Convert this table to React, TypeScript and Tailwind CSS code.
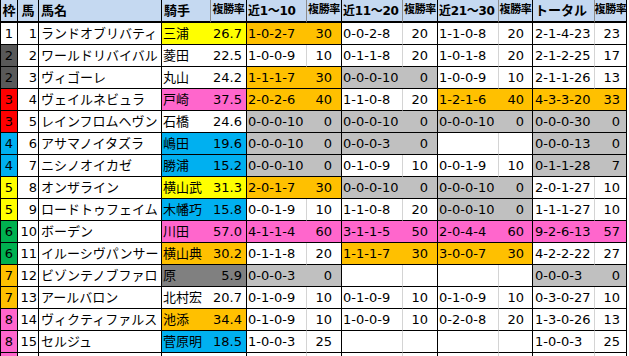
import React from "react";

type G = [string, string, string];
type Row = { f: string; fb: string; n: string; name: string; j: string; jb: string; jr: string; g: G[] };

const BG: Record<string, string> = {
  w: "bg-white",
  y: "bg-[#ffff00]",
  o: "bg-[#ffc000]",
  p: "bg-[#ff66cc]",
  b: "bg-[#00b0f0]",
  r: "bg-[#ff0000]",
  g: "bg-[#00b050]",
  d: "bg-[#595959]",
  m: "bg-[#808080]",
  l: "bg-[#c0c0c0]",
};

const E: G = ["", "", "w"];

const ROWS: Row[] = [
  { f: "1", fb: "w", n: "1", name: "ランドオブリバティ", j: "三浦", jb: "y", jr: "26.7", g: [["1-0-2-7", "30", "o"], ["0-0-2-8", "20", "w"], ["1-1-0-8", "20", "w"], ["2-1-4-23", "23", "w"]] },
  { f: "2", fb: "d", n: "2", name: "ワールドリバイバル", j: "菱田", jb: "w", jr: "22.5", g: [["1-0-0-9", "10", "w"], ["0-1-1-8", "20", "w"], ["1-0-1-8", "20", "w"], ["2-1-2-25", "17", "w"]] },
  { f: "2", fb: "d", n: "3", name: "ヴィゴーレ", j: "丸山", jb: "w", jr: "24.2", g: [["1-1-1-7", "30", "o"], ["0-0-0-10", "0", "l"], ["1-0-0-9", "10", "w"], ["2-1-1-26", "13", "w"]] },
  { f: "3", fb: "r", n: "4", name: "ヴェイルネビュラ", j: "戸崎", jb: "p", jr: "37.5", g: [["2-0-2-6", "40", "o"], ["1-1-0-8", "20", "w"], ["1-2-1-6", "40", "o"], ["4-3-3-20", "33", "o"]] },
  { f: "3", fb: "r", n: "5", name: "レインフロムヘヴン", j: "石橋", jb: "w", jr: "24.6", g: [["0-0-0-10", "0", "l"], ["0-0-0-10", "0", "l"], ["0-0-0-10", "0", "l"], ["0-0-0-30", "0", "l"]] },
  { f: "4", fb: "b", n: "6", name: "アサマノイタズラ", j: "嶋田", jb: "b", jr: "19.6", g: [["0-0-0-10", "0", "l"], ["0-0-0-3", "0", "l"], E, ["0-0-0-13", "0", "l"]] },
  { f: "4", fb: "b", n: "7", name: "ニシノオイカゼ", j: "勝浦", jb: "b", jr: "15.2", g: [["0-0-0-10", "0", "l"], ["0-1-0-9", "10", "w"], ["0-0-1-9", "10", "w"], ["0-1-1-28", "7", "l"]] },
  { f: "5", fb: "y", n: "8", name: "オンザライン", j: "横山武", jb: "y", jr: "31.3", g: [["2-0-1-7", "30", "o"], ["0-0-0-10", "0", "l"], ["0-0-0-10", "0", "l"], ["2-0-1-27", "10", "w"]] },
  { f: "5", fb: "y", n: "9", name: "ロードトゥフェイム", j: "木幡巧", jb: "b", jr: "15.8", g: [["0-0-1-9", "10", "w"], ["1-1-0-8", "20", "w"], ["0-0-0-10", "0", "l"], ["1-1-1-27", "10", "w"]] },
  { f: "6", fb: "g", n: "10", name: "ボーデン", j: "川田", jb: "p", jr: "57.0", g: [["4-1-1-4", "60", "p"], ["3-1-1-5", "50", "p"], ["2-0-4-4", "60", "p"], ["9-2-6-13", "57", "p"]] },
  { f: "6", fb: "g", n: "11", name: "イルーシヴパンサー", j: "横山典", jb: "o", jr: "30.2", g: [["0-1-1-8", "20", "w"], ["1-1-1-7", "30", "o"], ["3-0-0-7", "30", "o"], ["4-2-2-22", "27", "w"]] },
  { f: "7", fb: "o", n: "12", name: "ビゾンテノブファロ", j: "原", jb: "m", jr: "5.9", g: [["0-0-0-3", "0", "l"], E, E, ["0-0-0-3", "0", "l"]] },
  { f: "7", fb: "o", n: "13", name: "アールバロン", j: "北村宏", jb: "w", jr: "20.7", g: [["0-1-0-9", "10", "w"], ["0-1-0-9", "10", "w"], ["0-1-0-9", "10", "w"], ["0-3-0-27", "10", "w"]] },
  { f: "8", fb: "p", n: "14", name: "ヴィクティファルス", j: "池添", jb: "o", jr: "34.4", g: [["0-1-0-9", "10", "w"], ["1-0-0-9", "10", "w"], ["0-2-0-8", "20", "w"], ["1-3-0-26", "13", "w"]] },
  { f: "8", fb: "p", n: "15", name: "セルジュ", j: "菅原明", jb: "b", jr: "18.5", g: [["1-0-0-3", "25", "w"], E, E, ["1-0-0-3", "25", "w"]] },
  { f: "", fb: "p", n: "", name: "", j: "", jb: "w", jr: "", g: [E, E, E, E] },
];

const PR = ["pr-[9px]", "pr-[9px]", "pr-[8px]", "pr-[6px]"];
const PL = ["pl-[1px]", "pl-[1px]", "pl-[1px]", "pl-[2px]"];

const H = "h-[23px] border-b-2 border-b-black bg-[#c5d9f1] flex items-center whitespace-nowrap font-bold text-[13px] text-black";
const HB = "border-r border-r-black";
const HG = "border-r border-r-[#8c8c8c]";
const R = "h-[22px] border-b border-b-black flex items-center overflow-hidden whitespace-nowrap text-[13px] text-black leading-none";
const RB = "border-r border-r-black";

function HeadRate() {
  return (
    <div className={`${H} ${HB} justify-center overflow-visible`}>
      <span className="text-[11px] tracking-[-0.4px]">複勝率</span>
    </div>
  );
}

function HeadRange({ label }: { label: string }) {
  return (
    <div className={`${H} ${HG} pl-[1px] overflow-visible`}>
      <span className="text-[12px] tracking-[-0.3px]">{label}</span>
    </div>
  );
}

export default function App() {
  return (
    <div className="w-[629px] h-[356px] overflow-hidden bg-white font-['DejaVu_Sans','Noto_Sans_CJK_JP',sans-serif]">
      <div className="grid w-max grid-cols-[17px_21px_123px_49px_36px_60px_35px_61px_35px_61px_34px_62px_32px] border-l border-l-black">
        <div className={`${H} ${HB} justify-center`}>枠</div>
        <div className={`${H} ${HB} justify-center`}>馬</div>
        <div className={`${H} ${HB} pl-[2px]`}>馬名</div>
        <div className={`${H} ${HG} pl-[2px]`}>騎手</div>
        <HeadRate />
        <HeadRange label="近1～10" />
        <HeadRate />
        <HeadRange label="近11～20" />
        <HeadRate />
        <HeadRange label="近21～30" />
        <HeadRate />
        <div className={`${H} ${HG} pl-[2px]`}>トータル</div>
        <HeadRate />

        {ROWS.map((r, i) => (
          <React.Fragment key={i}>
            <div className={`${R} ${BG[r.fb]} ${RB} justify-center`}>{r.f}</div>
            <div className={`${R} bg-white ${RB} justify-end pr-[1px]`}>{r.n}</div>
            <div className={`${R} bg-white ${RB} pl-[2px]`}>{r.name}</div>
            <div className={`${R} ${BG[r.jb]} pl-[1px]`}>{r.j}</div>
            <div className={`${R} ${BG[r.jb]} ${RB} justify-end pr-[4px]`}>{r.jr}</div>
            {r.g.map((g, k) => (
              <React.Fragment key={k}>
                <div className={`${R} ${BG[g[2]]} ${PL[k]} ${g[2] === "w" ? "border-r border-r-[#d4d4d4]" : ""}`}>{g[0]}</div>
                <div className={`${R} ${BG[g[2]]} ${RB} justify-end ${PR[k]}`}>{g[1]}</div>
              </React.Fragment>
            ))}
          </React.Fragment>
        ))}
      </div>
    </div>
  );
}
